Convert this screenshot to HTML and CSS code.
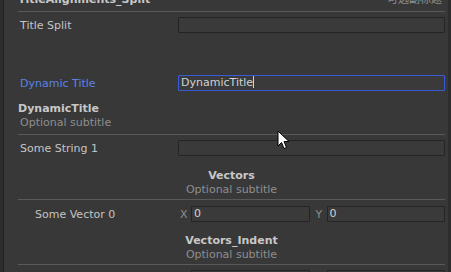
FILE: index.html
```html
<!DOCTYPE html>
<html lang="en">
<head>
  <meta charset="UTF-8" />
  <title>TitleAlignments Inspector</title>
  <link rel="stylesheet" href="styles.css">
</head>
<body>

<div class="window">
  <div class="edge-left"></div>
  <div class="inspector">
    <div class="group-head split">
      <span class="group-title">TitleAlignments_Split</span>
      <span class="group-sub cjk">可选副标题</span>
    </div>
    <div class="sep sep-top"></div>

    <div class="row row-first">
      <div class="label">Title Split</div>
      <div class="field"></div>
    </div>

    <div class="row row-dynamic">
      <div class="label active">Dynamic Title</div>
      <div class="field focus">DynamicTitle<span class="caret"></span></div>
    </div>

    <div class="group-head left head-dynamic">
      <div class="group-title">DynamicTitle</div>
      <div class="group-sub">Optional subtitle</div>
    </div>
    <div class="sep sep-a"></div>

    <div class="row row-after-sep">
      <div class="label">Some String 1</div>
      <div class="field"></div>
    </div>

    <div class="group-head center head-vectors">
      <div class="group-title">Vectors</div>
      <div class="group-sub">Optional subtitle</div>
    </div>
    <div class="sep sep-b"></div>

    <div class="row row-vector">
      <div class="label indent">Some Vector 0</div>
      <div class="vector">
        <div class="axis"><span class="axis-name">X</span><div class="field">0</div></div>
        <div class="axis"><span class="axis-name">Y</span><div class="field">0</div></div>
      </div>
    </div>

    <div class="group-head center head-indent">
      <div class="group-title">Vectors_Indent</div>
      <div class="group-sub">Optional subtitle</div>
    </div>
    <div class="sep sep-b"></div>

    <div class="row row-after-sep">
      <div class="label indent"></div>
      <div class="vector">
        <div class="axis"><span class="axis-name">X</span><div class="field"></div></div>
        <div class="axis"><span class="axis-name">Y</span><div class="field"></div></div>
      </div>
    </div>
  </div>
  <div class="edge-right"></div>

  <!-- mouse pointer over the panel -->
  <svg class="pointer" width="14" height="20" viewBox="0 0 14 20">
    <path d="M1 1 L1 16 L4.5 12.5 L7 18.5 L9.5 17.5 L7 11.5 L12 11.5 Z" fill="#fff" stroke="#000" stroke-width="1" stroke-linejoin="miter"/>
  </svg>
</div>

</body>
</html>
```

FILE: styles.css
```css
:root {
  --bg: #383838;
  --edge: #2d2d2d;
  --text: #c4c4c4;
  --muted: #8e8e8e;
  --accent: #5a83e6;
  --focus: #3a5bd8;
  --sep: #595959;
  --field-bg: #3a3a3a;
  --field-border: #242424;
}

html, body {
  margin: 0;
  height: 100%;
  background: var(--bg);
  overflow: hidden;
}

body {
  font-family: "DejaVu Sans", Verdana, sans-serif;
  font-size: 11px;
  color: var(--text);
}

.window {
  display: flex;
  height: 272px;
  width: 451px;
  position: relative;
  overflow: hidden;
}

.edge-left {
  width: 3px;
  background: var(--edge);
  border-right: 1px solid #232323;
  flex: none;
}

.edge-right {
  width: 3px;
  background: var(--edge);
  flex: none;
}

.inspector {
  flex: 1;
  padding: 0 3px 0 14px;
  margin-top: -7px;
}

/* group headers */
.group-head {
  line-height: 14px;
}

.group-title {
  font-weight: bold;
  color: #c8c8c8;
}

.group-sub {
  color: var(--muted);
}

.group-head.split {
  display: flex;
  justify-content: space-between;
  align-items: baseline;
  padding-right: 3px;
}

.cjk {
  font-family: "DejaVu Sans", "Noto Sans CJK SC", sans-serif;
}

.group-head.left .group-sub {
  padding-left: 2px;
}

.group-head.center {
  text-align: center;
}

.head-dynamic { margin-top: 11px; }
.head-vectors { margin-top: 13px; }
.head-indent { margin-top: 12px; }

.sep {
  height: 1px;
  background: var(--sep);
}

.sep-top { margin-top: 4px; }
.sep-a { margin-top: 4px; }
.sep-b { margin-top: 2px; }

/* property rows */
.row {
  display: flex;
  align-items: center;
  height: 16px;
}

.row-first { margin-top: 5px; }
.row-dynamic { margin-top: 42px; }
.row-after-sep { margin-top: 5px; }
.row-vector { margin-top: 6px; }

.label {
  width: 160px;
  flex: none;
  padding-left: 2px;
  box-sizing: border-box;
  white-space: nowrap;
}

.label.indent {
  padding-left: 17px;
}

.label.active {
  color: var(--accent);
}

.field {
  flex: 1;
  height: 16px;
  box-sizing: border-box;
  background: var(--field-bg);
  border: 1px solid var(--field-border);
  border-radius: 1px;
  padding-left: 2px;
  line-height: 14px;
  color: #d2d2d2;
  white-space: nowrap;
  overflow: hidden;
}

.field.focus {
  border-color: var(--focus);
}

.caret {
  display: inline-block;
  width: 1px;
  height: 12px;
  background: #d2d2d2;
  vertical-align: -2px;
}

.vector {
  flex: 1;
  display: grid;
  grid-template-columns: 1fr 1fr;
  gap: 4px;
}

.axis {
  display: flex;
  align-items: center;
}

.axis-name {
  width: 13px;
  flex: none;
  padding-left: 2px;
  box-sizing: border-box;
  color: var(--muted);
}

.pointer {
  position: absolute;
  left: 277px;
  top: 130px;
}
```
